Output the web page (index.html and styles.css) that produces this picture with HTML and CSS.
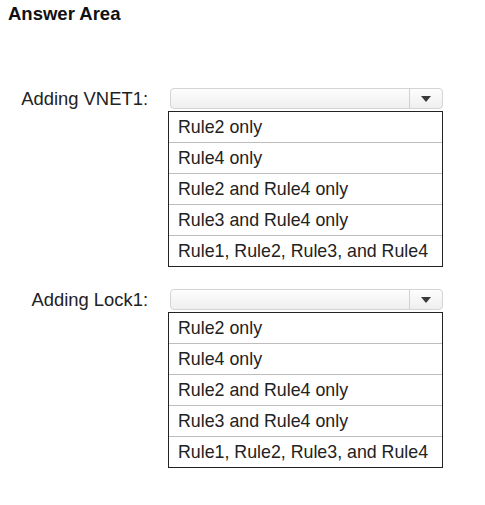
FILE: index.html
```html
<!DOCTYPE html>
<html lang="en">
<head>
  <meta charset="UTF-8" />
  <title>Answer Area</title>
  <link rel="stylesheet" href="styles.css">
</head>
<body>
  <div class="title">Answer Area</div>

  <div class="field first">
    <div class="label">Adding VNET1:</div>
    <div class="select">
      <div class="select-value"></div>
      <div class="select-arrow"><span class="caret"></span></div>
    </div>
    <ul class="options">
      <li>Rule2 only</li>
      <li>Rule4 only</li>
      <li>Rule2 and Rule4 only</li>
      <li>Rule3 and Rule4 only</li>
      <li>Rule1, Rule2, Rule3, and Rule4</li>
    </ul>
  </div>

  <div class="field second">
    <div class="label">Adding Lock1:</div>
    <div class="select">
      <div class="select-value"></div>
      <div class="select-arrow"><span class="caret"></span></div>
    </div>
    <ul class="options">
      <li>Rule2 only</li>
      <li>Rule4 only</li>
      <li>Rule2 and Rule4 only</li>
      <li>Rule3 and Rule4 only</li>
      <li>Rule1, Rule2, Rule3, and Rule4</li>
    </ul>
  </div>
</body>
</html>
```

FILE: styles.css
```css
* {
  box-sizing: border-box;
  margin: 0;
  padding: 0;
}

body {
  background: #fff;
  color: #222;
  font-family: 'Liberation Sans', Arial, sans-serif;
}

/* Heading */
.title {
  margin-top: 4px;
  padding-left: 8px;
  font-size: 18.5px;
  line-height: 20px;
  font-weight: 700;
  color: #111;
}

/* One question: label, closed select, open option list */
.field {
  display: grid;
  grid-template-columns: 148px 275px;
  column-gap: 20px;
  row-gap: 2px;
}
.field.first {
  margin-top: 64px;
}
.field.second {
  margin-top: 22px;
}

.label {
  grid-column: 1;
  grid-row: 1;
  align-self: center;
  text-align: right;
  font-size: 18.4px;
  line-height: 20px;
}

.select {
  grid-column: 2;
  grid-row: 1;
  display: flex;
  height: 21px;
  margin-left: 2px;
  border: 1px solid #d4d4d4;
  border-radius: 4px;
  background: linear-gradient(#fdfdfd, #efefef);
}
.select-value {
  flex: 1;
}
.select-arrow {
  width: 33px;
  display: flex;
  align-items: center;
  justify-content: center;
  border-left: 1px solid #d0d0d0;
}
.caret {
  width: 0;
  height: 0;
  border-left: 5px solid transparent;
  border-right: 5px solid transparent;
  border-top: 6px solid #3a3a3a;
}

.options {
  grid-column: 2;
  grid-row: 2;
  list-style: none;
  border: 1px solid #222;
}
.options li {
  height: 31px;
  padding-left: 9px;
  font-size: 17.8px;
  line-height: 30px;
  border-top: 1px solid #bdbdbd;
}
.options li:first-child {
  height: 30px;
  border-top: none;
}
```
